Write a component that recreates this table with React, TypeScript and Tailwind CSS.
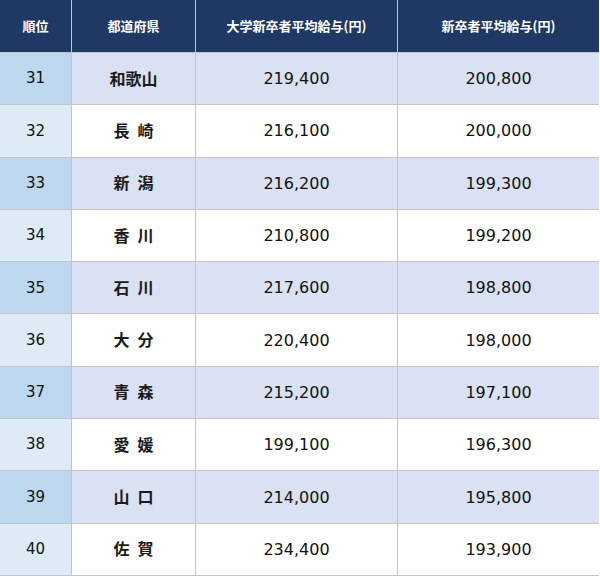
const rows = [
  { rank: 31, pref: "和歌山", univ: "219,400", all: "200,800" },
  { rank: 32, pref: "長\u2002崎", univ: "216,100", all: "200,000" },
  { rank: 33, pref: "新\u2002潟", univ: "216,200", all: "199,300" },
  { rank: 34, pref: "香\u2002川", univ: "210,800", all: "199,200" },
  { rank: 35, pref: "石\u2002川", univ: "217,600", all: "198,800" },
  { rank: 36, pref: "大\u2002分", univ: "220,400", all: "198,000" },
  { rank: 37, pref: "青\u2002森", univ: "215,200", all: "197,100" },
  { rank: 38, pref: "愛\u2002媛", univ: "199,100", all: "196,300" },
  { rank: 39, pref: "山\u2002口", univ: "214,000", all: "195,800" },
  { rank: 40, pref: "佐\u2002賀", univ: "234,400", all: "193,900" },
];

const headers = ["順位", "都道府県", "大学新卒者平均給与(円)", "新卒者平均給与(円)"];

export default function App() {
  return (
    <div className="h-[576px] w-[600px] bg-white font-['Noto_Sans_CJK_JP','Noto_Sans',sans-serif]">
      <div className="grid h-[576px] w-[599px] grid-cols-[71px_123px_201px_201px] grid-rows-[52px_repeat(10,minmax(0,1fr))] gap-px border-r border-b border-[#c4c4c4] bg-[#c4c4c4]">
        {/* header */}
        {headers.map((h) => (
          <div
            key={h}
            className="flex items-center justify-center bg-[#1f3864] text-[13px] font-bold text-white"
          >
            {h}
          </div>
        ))}

        {rows.map((r, i) => {
          const odd = i % 2 === 0;
          const cell = odd ? "bg-[#d9e1f2]" : "bg-white";
          return [
            <div
              key={`${r.rank}-a`}
              className={`flex items-center justify-center font-['DejaVu_Sans',sans-serif] text-[15px] text-[#111] ${odd ? "bg-[#bdd7ee]" : "bg-[#ddebf7]"}`}
            >
              {r.rank}
            </div>,
            <div
              key={`${r.rank}-b`}
              className={`flex items-center justify-center whitespace-pre pb-[2px] text-[16px] font-bold text-[#1a1a1a] ${cell}`}
            >
              {r.pref}
            </div>,
            <div
              key={`${r.rank}-c`}
              className={`flex items-center justify-center pt-px font-['DejaVu_Sans',sans-serif] text-[16px] text-[#111] ${cell}`}
            >
              {r.univ}
            </div>,
            <div
              key={`${r.rank}-d`}
              className={`flex items-center justify-center pt-px font-['DejaVu_Sans',sans-serif] text-[16px] text-[#111] ${cell}`}
            >
              {r.all}
            </div>,
          ];
        })}
      </div>
    </div>
  );
}
